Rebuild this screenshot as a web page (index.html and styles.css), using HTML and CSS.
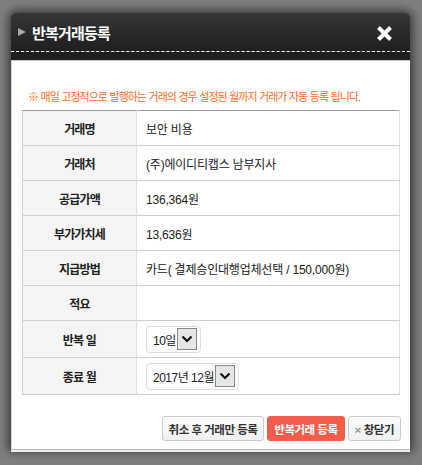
FILE: index.html
```html
<!DOCTYPE html>
<html>
  <head>
    <title>반복거래등록</title>
    <meta charset="UTF-8">
    <meta name="viewport" content="width=device-width, initial-scale=1"/>
    <link rel="stylesheet" href="styles.css">
  </head>
  <body>
    <div class="modal">
      <div class="modal-head">
        <h1 class="title"><span class="tri"></span>반복거래등록</h1>
        <button class="close" aria-label="닫기">
          <svg width="17" height="17" viewBox="0 0 17 17"><path d="M2.5 2.5L14.5 14.5M14.5 2.5L2.5 14.5" stroke="#fff" stroke-width="4"/></svg>
        </button>
      </div>
      <div class="modal-body">
        <p class="notice">※ 매일 고정적으로 발행하는 거래의 경우 설정된 월까지 거래가 자동 등록 됩니다.</p>
        <table class="form">
          <tr><th>거래명</th><td>보안 비용</td></tr>
          <tr><th>거래처</th><td>(주)에이디티캡스 남부지사</td></tr>
          <tr><th>공급가액</th><td>136,364원</td></tr>
          <tr><th>부가가치세</th><td>13,636원</td></tr>
          <tr><th>지급방법</th><td>카드( 결제승인대행업체선택 / 150,000원)</td></tr>
          <tr><th>적요</th><td></td></tr>
          <tr class="tall"><th>반복 일</th><td><span class="select">10일<span class="arrow"><svg width="12" height="8" viewBox="0 0 12 8"><path d="M1.5 1.5L6 6L10.5 1.5" fill="none" stroke="#111" stroke-width="2.2"/></svg></span></span></td></tr>
          <tr class="tall"><th>종료 월</th><td><span class="select">2017년 12월<span class="arrow"><svg width="12" height="8" viewBox="0 0 12 8"><path d="M1.5 1.5L6 6L10.5 1.5" fill="none" stroke="#111" stroke-width="2.2"/></svg></span></span></td></tr>
        </table>
        <div class="actions">
          <button class="btn">취소 후 거래만 등록</button>
          <button class="btn btn-red">반복거래 등록</button>
          <button class="btn"><span class="x">×</span>창닫기</button>
        </div>
      </div>
    </div>
  </body>
</html>
```
FILE: styles.css
```css
html, body {
  height: 100%;
}
body {
  margin: 0;
  background-color: #7f7f7f;
  font-family: 'Liberation Sans', 'Noto Sans CJK KR', sans-serif;
  color: #222;
  overflow: hidden;
}
.modal {
  width: 399px;
  margin: 13px 0 0 11px;
  background-color: #1f1f1f;
  border-radius: 6px 6px 0 0;
  box-shadow: 0 0 10px 3px rgba(0,0,0,0.55);
}
.modal-head {
  height: 38px;
  display: flex;
  align-items: center;
  justify-content: space-between;
  padding: 0 17px 0 7px;
  background: linear-gradient(#363636, #1f1f1f);
  border-bottom: 1px dashed #fff;
  border-radius: 6px 6px 0 0;
}
.title {
  margin: 0;
  display: flex;
  align-items: center;
  color: #fff;
  font-size: 15px;
  font-weight: bold;
  letter-spacing: -0.8px;
}
.tri {
  width: 0;
  height: 0;
  border-top: 4.5px solid transparent;
  border-bottom: 4.5px solid transparent;
  border-left: 8px solid #a9a9a9;
  margin-right: 6px;
}
.close {
  background: none;
  border: none;
  padding: 0;
  margin-top: 2px;
  cursor: pointer;
  display: flex;
}
.modal-body {
  margin-top: 8px;
  background-color: #fff;
  border-top: 1px solid #c8c8c8;
  border-left: 1px solid #d8d8d8;
  padding: 29px 9px 8px 10px;
  box-shadow: 0 1px 0 #bbb, 0 3px 0 #ececec;
}
.notice {
  margin: 0 0 6px 6px;
  line-height: 14px;
  font-size: 11px;
  letter-spacing: -1px;
  word-spacing: 0.5px;
  color: #ff6b1c;
}
.form {
  width: 378px;
  border-collapse: collapse;
  border-top: 1px solid #9e9e9e;
  border-left: 1px solid #d0d0d0;
  border-right: 1px solid #e0e0e0;
  font-size: 12px;
}
.form tr {
  border-bottom: 1px solid #cfcfcf;
}
.form th {
  width: 113px;
  height: 34px;
  padding: 0;
  background-color: #f5f5f5;
  border-right: 1px solid #e0e0e0;
  font-weight: bold;
  letter-spacing: -0.8px;
  text-align: center;
}
.form td {
  padding: 0 9px;
  letter-spacing: -0.2px;
}
.form tr.tall th {
  height: 36px;
}
.select {
  display: inline-flex;
  align-items: center;
  gap: 1px;
  height: 27px;
  box-sizing: border-box;
  padding: 0 3px 0 6px;
  border: 1px solid #ddd;
  border-radius: 4px;
  letter-spacing: -0.5px;
}
.select .arrow {
  width: 18px;
  height: 20px;
  display: flex;
  align-items: center;
  justify-content: center;
  border: 1px solid #8a8a8a;
  background-color: #e6e6e6;
}
.actions {
  display: flex;
  justify-content: flex-end;
  gap: 3px;
  margin-top: 21px;
}
.btn {
  height: 25px;
  padding: 0 6px;
  border: 1px solid #ccc;
  border-radius: 3px;
  background: linear-gradient(#fcfcfc, #f0f0f0);
  color: #333;
  font-family: inherit;
  font-size: 11.5px;
  font-weight: bold;
  letter-spacing: -0.5px;
  cursor: pointer;
}
.btn-red {
  background: #f25c4b;
  border-color: #f25c4b;
  color: #fff;
}
.x {
  color: #999;
  margin-right: 3px;
}
```
